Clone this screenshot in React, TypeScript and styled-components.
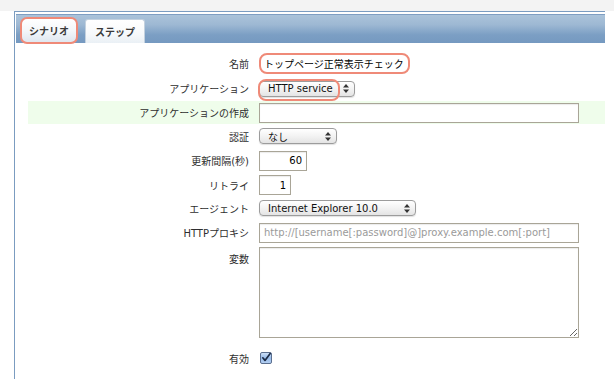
import React from "react";
import styled, { createGlobalStyle } from "styled-components";

const GlobalStyle = createGlobalStyle`
  html, body { margin: 0; padding: 0; background: #fff; }
  body {
    font-family: "DejaVu Sans", "Noto Sans CJK JP", sans-serif;
    font-size: 10px;
    color: #333;
  }
  * { box-sizing: border-box; }
`;

const TopStrip = styled.div`
  height: 11px;
  background: #f3f3f3;
`;

const Panel = styled.div`
  margin-left: 14px;
  width: 591px;
  height: 368px;
  border-left: 1px solid #7b9cc0;
  border-top: 1px solid #7b9cc0;
  padding: 2px 0 0 1px;
  background: #fff;
`;

const Header = styled.div`
  height: 29px;
  border-top: 1px solid #7f9ec2;
  background: linear-gradient(to bottom, #abc3da 0%, #9db8d3 35%, #7c9fc4 70%, #7599c0 100%);
  display: flex;
  align-items: flex-start;
  gap: 7px;
  padding-left: 4px;
  position: relative;
  z-index: 1;
`;

const Tab = styled.div<{ $active?: boolean }>`
  display: flex;
  align-items: center;
  justify-content: center;
  font-weight: bold;
  font-size: 10px;
  color: #3b3b3b;
  ${(p) =>
    p.$active
      ? `
    margin-top: 2px;
    width: 58px;
    height: 27px;
    border: 2px solid #ef8a78;
    border-radius: 7px;
    background: linear-gradient(to bottom, #ffffff 0%, #f4f7fa 50%, #dfe7f0 100%);
  `
      : `
    margin-top: 4px;
    width: 60px;
    height: 24px;
    border: 1px solid #c3d1df;
    border-bottom: none;
    border-radius: 3px 3px 0 0;
    background: linear-gradient(to bottom, #ffffff 0%, #f7f9fb 60%, #eaf0f5 100%);
  `}
`;

const Form = styled.div`
  margin-top: 7px;
  margin-left: 12px;
  display: flex;
  flex-direction: column;
`;

const Row = styled.div<{ $h: number; $green?: boolean; $top?: boolean }>`
  display: flex;
  align-items: ${(p) => (p.$top ? "flex-start" : "center")};
  height: ${(p) => p.$h}px;
  background: ${(p) => (p.$green ? "#effdeb" : "transparent")};
`;

const Label = styled.div<{ $padTop?: number }>`
  width: 221px;
  text-align: right;
  font-size: 10px;
  color: #2e2e2e;
  white-space: nowrap;
  padding-top: ${(p) => p.$padTop ?? 0}px;
`;

const Field = styled.div`
  margin-left: 10px;
  display: flex;
  align-items: center;
`;

const TextInput = styled.input<{ $w: number; $right?: boolean }>`
  width: ${(p) => p.$w}px;
  height: 20px;
  border: 1px solid #a9a597;
  box-shadow: inset 0 1px 1px rgba(0, 0, 0, 0.08);
  background: #fff;
  font-family: "DejaVu Sans", "Noto Sans CJK JP", sans-serif;
  font-size: 10px;
  color: #000;
  padding: 0 4px;
  text-align: ${(p) => (p.$right ? "right" : "left")};
  outline: none;
  &::placeholder { color: #9a9a9a; }
`;

const HighlightInput = styled(TextInput)`
  border: 2px solid #ef8a78;
  border-radius: 8px;
  height: 21px;
  padding: 0 3px;
  box-shadow: none;
`;

const SelectBox = styled.div<{ $w: number }>`
  position: relative;
  width: ${(p) => p.$w}px;
  height: 16px;
  border: 1px solid #9c9c9c;
  border-radius: 4px;
  background: linear-gradient(to bottom, #ffffff 0%, #f3f3f3 50%, #e4e4e4 100%);
  box-shadow: 0 1px 1px rgba(0, 0, 0, 0.12);
  display: flex;
  align-items: center;
  padding-left: 8px;
  font-size: 10px;
  color: #111;
`;

const SelectText = styled.span`
  flex: 1;
  white-space: nowrap;
`;

const Arrows = styled.svg`
  width: 6px;
  height: 9px;
  margin-right: 5px;
`;

const Annotation = styled.div`
  position: absolute;
  left: -2px;
  top: -3px;
  width: 82px;
  height: 22px;
  border: 2px solid #ef8a78;
  border-radius: 8px;
  pointer-events: none;
`;

const TextArea = styled.textarea`
  width: 320px;
  height: 91px;
  border: 1px solid #a9a597;
  box-shadow: inset 0 1px 1px rgba(0, 0, 0, 0.08);
  margin: 1px 0 0 0;
  font-family: "DejaVu Sans", "Noto Sans CJK JP", sans-serif;
  font-size: 10px;
  outline: none;
`;

const CheckSvg = styled.svg`
  width: 12px;
  height: 12px;
  margin-left: 1px;
  display: block;
`;

function Select({ w, text, annotated }: { w: number; text: string; annotated?: boolean }) {
  return (
    <SelectBox $w={w}>
      <SelectText>{text}</SelectText>
      <Arrows viewBox="0 0 6 9">
        <path d="M3 0 L6 3.5 L0 3.5 Z" fill="#333" />
        <path d="M0 5.5 L6 5.5 L3 9 Z" fill="#333" />
      </Arrows>
      {annotated && <Annotation />}
    </SelectBox>
  );
}

function Checkbox() {
  return (
    <CheckSvg viewBox="0 0 12 12">
      <defs>
        <linearGradient id="cbg" x1="0" y1="0" x2="0" y2="1">
          <stop offset="0" stopColor="#d2e3f8" />
          <stop offset="0.5" stopColor="#97bbea" />
          <stop offset="1" stopColor="#b5d0f2" />
        </linearGradient>
      </defs>
      <rect x="0.5" y="0.5" width="11" height="11" rx="1.5" fill="url(#cbg)" stroke="#5b6f8f" />
      <path d="M2.8 5.8 L5 8.4 L10.2 1.6" fill="none" stroke="#1b2a44" strokeWidth="1.7" strokeLinecap="round" strokeLinejoin="round" />
    </CheckSvg>
  );
}

export default function App() {
  return (
    <>
      <GlobalStyle />
      <TopStrip />
      <Panel>
        <Header>
          <Tab $active>シナリオ</Tab>
          <Tab>ステップ</Tab>
        </Header>
        <Form>
          <Row $h={26}>
            <Label>名前</Label>
            <Field>
              <HighlightInput $w={151} defaultValue="トップページ正常表示チェック" />
            </Field>
          </Row>
          <Row $h={25}>
            <Label>アプリケーション</Label>
            <Field>
              <Select w={96} text="HTTP service" annotated />
            </Field>
          </Row>
          <Row $h={23} $green>
            <Label>アプリケーションの作成</Label>
            <Field>
              <TextInput $w={320} defaultValue="" />
            </Field>
          </Row>
          <Row $h={24}>
            <Label>認証</Label>
            <Field>
              <Select w={78} text="なし" />
            </Field>
          </Row>
          <Row $h={25}>
            <Label>更新間隔(秒)</Label>
            <Field>
              <TextInput $w={48} $right defaultValue="60" />
            </Field>
          </Row>
          <Row $h={24}>
            <Label>リトライ</Label>
            <Field>
              <TextInput $w={32} $right defaultValue="1" />
            </Field>
          </Row>
          <Row $h={22}>
            <Label>エージェント</Label>
            <Field>
              <Select w={157} text="Internet Explorer 10.0" />
            </Field>
          </Row>
          <Row $h={27}>
            <Label>HTTPプロキシ</Label>
            <Field>
              <TextInput $w={320} placeholder="http://[username[:password]@]proxy.example.com[:port]" />
            </Field>
          </Row>
          <Row $h={94} $top>
            <Label $padTop={5}>変数</Label>
            <Field>
              <TextArea />
            </Field>
          </Row>
          <Row $h={36}>
            <Label>有効</Label>
            <Field>
              <Checkbox />
            </Field>
          </Row>
        </Form>
      </Panel>
    </>
  );
}
